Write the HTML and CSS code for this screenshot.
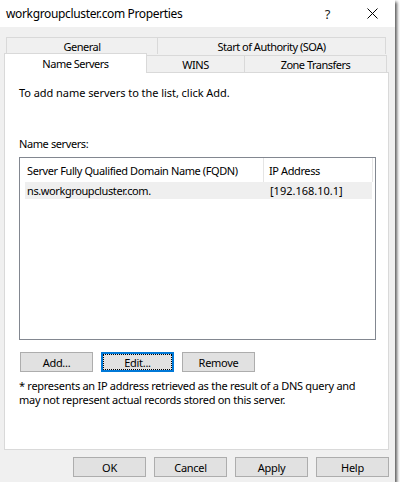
FILE: index.html
```html
<!DOCTYPE html>
<html>
<head>
<meta charset="utf-8">
<link rel="stylesheet" href="styles.css">
</head>
<body>
<div class="window">
  <div class="titlebar">
    <span class="title">workgroupcluster.com Properties</span>
    <span class="help">?</span>
    <svg class="close" width="11" height="11" viewBox="0 0 11 11"><path d="M0.5 0.5 L10.5 10.5 M10.5 0.5 L0.5 10.5" stroke="#000" stroke-width="1" fill="none"/></svg>
  </div>
  <div class="tabs">
    <div class="tabrow back">
      <div class="tab t-general">General</div>
      <div class="tab t-soa">Start of Authority (SOA)</div>
    </div>
    <div class="tabrow front">
      <div class="tab selected t-ns">Name Servers</div>
      <div class="tab t-wins">WINS</div>
      <div class="tab t-zone">Zone Transfers</div>
    </div>
  </div>
  <div class="panel">
    <p class="intro">To add name servers to the list, click Add.</p>
    <p class="label">Name servers:</p>
    <div class="listbox">
      <div class="lhead">
        <div class="hc hc1">Server Fully Qualified Domain Name (FQDN)</div>
        <div class="hc hc2">IP Address</div>
      </div>
      <div class="lrow">
        <div class="rc rc1">ns.workgroupcluster.com.</div>
        <div class="rc rc2">[192.168.10.1]</div>
      </div>
    </div>
    <div class="btnrow">
      <button class="btn">Add...</button>
      <button class="btn focus">Edit...</button>
      <button class="btn">Remove</button>
    </div>
    <p class="note">* represents an IP address retrieved as the result of a DNS query and<br>may not represent actual records stored on this server.</p>
  </div>
  <div class="footer">
    <button class="btn">OK</button>
    <button class="btn">Cancel</button>
    <button class="btn">Apply</button>
    <button class="btn">Help</button>
  </div>
</div>
</body>
</html>
```

FILE: styles.css
```css
* { box-sizing: border-box; }
body {
  margin: 0;
  background: #fff;
  font-family: "Noto Sans", "Liberation Sans", Arial, sans-serif;
  font-size: 11px;
  letter-spacing: -0.4px;
  color: #000;
}
.window {
  width: 395px;
  height: 482px;
  background: #f0f0f0;
  box-shadow: 2px 2px 3px rgba(0,0,0,0.65);
  display: flex;
  flex-direction: column;
  white-space: nowrap;
}
.titlebar {
  height: 27px;
  background: #fff;
  display: flex;
  align-items: center;
  padding: 0 17px 0 6px;
}
.title { flex: 1; font-size: 12px; letter-spacing: -0.35px; }
.help { font-size: 13px; margin-right: 37px; color: #222; }
.close { display: block; }

.tabs { padding: 10px 0 0 4px; }
.tabrow { display: flex; }
.tab {
  border: 1px solid #d9d9d9;
  border-bottom: none;
  background: #f0f0f0;
  display: flex;
  align-items: center;
  justify-content: center;
  line-height: 14px;
  letter-spacing: -0.5px;
}
.back { margin-left: 2px; height: 17px; }
.back .tab { height: 17px; padding-top: 2px; }
.t-general { width: 152px; }
.t-soa { width: 229px; margin-left: -1px; }
.front { margin-top: -1px; height: 19px; align-items: flex-end; }
.front .tab { height: 17px; padding-top: 2px; }
.front .tab.selected {
  height: 20px;
  margin-bottom: -1px;
  background: #fff;
  position: relative;
  z-index: 1;
  padding-top: 0;
}
.t-ns { width: 143px; }
.t-wins { width: 99px; margin-left: -1px; }
.t-zone { width: 143px; margin-left: -1px; }

.panel {
  margin-left: 4px;
  width: 385px;
  height: 378px;
  background: #fff;
  border: 1px solid #d9d9d9;
  padding: 12px 0 0 14px;
  display: flex;
  flex-direction: column;
}
.panel p { margin: 0; line-height: 15px; }
.panel .intro { letter-spacing: -0.05px; }
.panel .label { margin-top: 36px; }
.listbox {
  margin-top: 6px;
  width: 357px;
  height: 183px;
  border: 1px solid #828790;
  background: #fff;
}
.lhead { display: flex; height: 24px; }
.hc {
  display: flex;
  align-items: center;
  border-right: 1px solid #e5e5e5;
}
.hc1 { width: 244px; padding-left: 7px; }
.hc2 { width: 109px; padding-left: 5px; }
.lrow {
  display: flex;
  height: 17px;
  margin-left: 5px;
  width: 347px;
  background: #efefef;
  align-items: center;
}
.rc1 { width: 239px; padding-left: 2px; }
.rc2 { padding-left: 6px; letter-spacing: 0; }

.btnrow { display: flex; gap: 8px; margin-top: 12px; padding-left: 1px; }
.btn {
  width: 73px;
  height: 20px;
  background: #e1e1e1;
  border: 1px solid #adadad;
  font-family: inherit;
  font-size: 11px;
  letter-spacing: -0.3px;
  color: #000;
  padding: 0;
  margin: 0;
}
.btn.focus {
  border: 2px solid #0078d7;
  outline: 1px dotted #000;
  outline-offset: -3px;
}
.panel .note { margin-top: 7px; line-height: 14px; letter-spacing: -0.28px; }

.footer {
  display: flex;
  gap: 8px;
  justify-content: flex-end;
  padding-right: 6px;
  margin-top: 7px;
}
```
